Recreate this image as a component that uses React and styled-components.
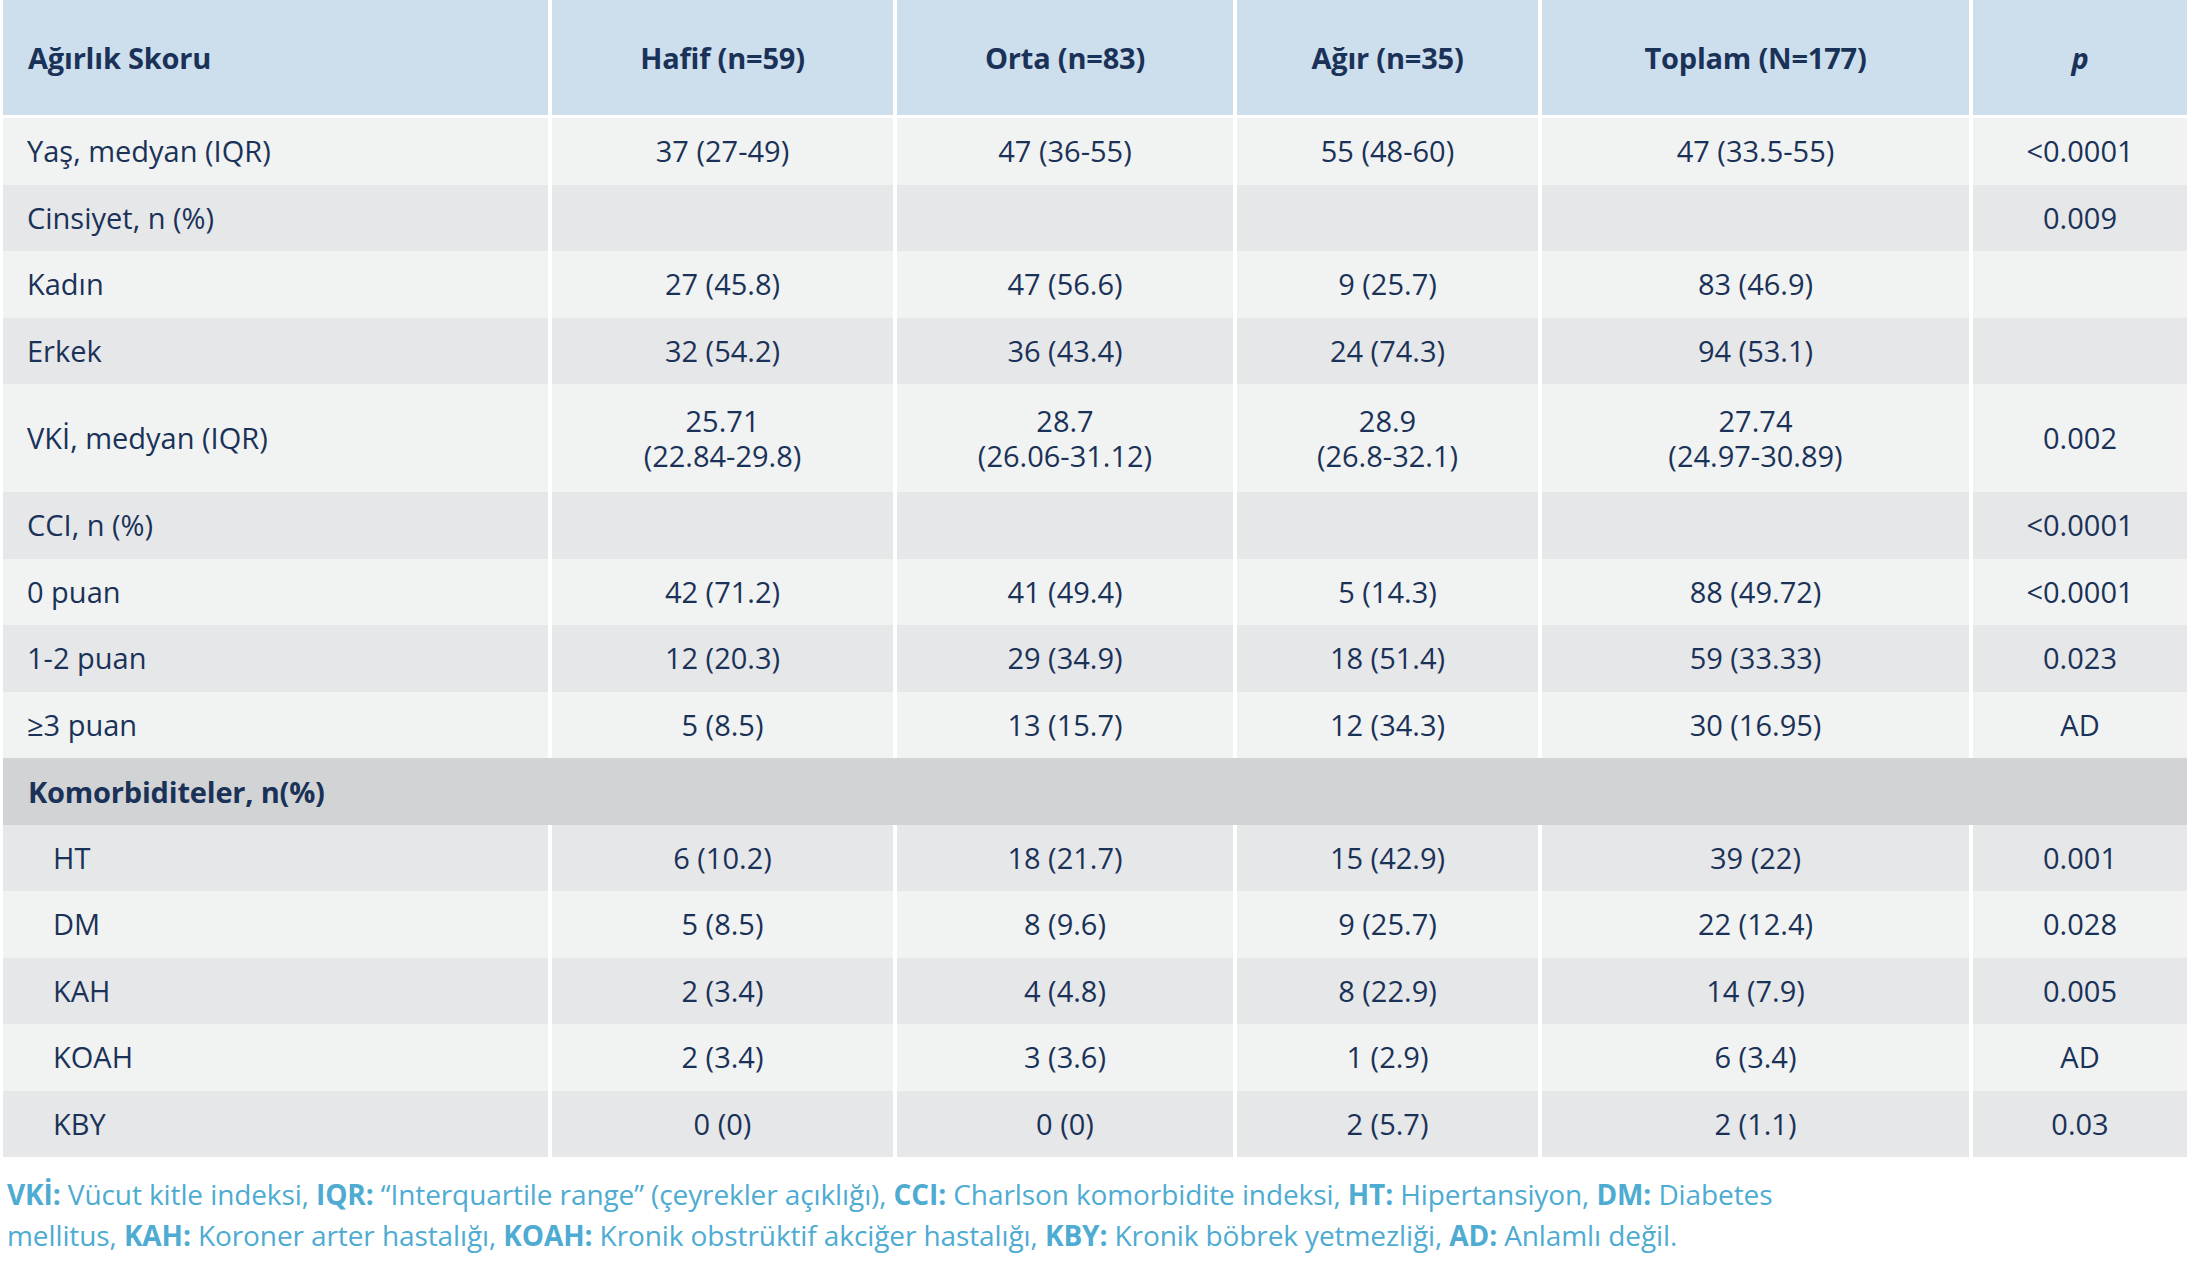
import React from "react";
import styled, { createGlobalStyle } from "styled-components";

const Global = createGlobalStyle`
  html, body { margin: 0; padding: 0; background: #ffffff; }
  body { font-family: "Open Sans", "Noto Sans", sans-serif; color: #1b3258; }
`;

const COLS = "545px 341px 336px 301px 427px 214px";

const Page = styled.div`
  width: 2189px;
  padding: 0 0 0 3px;
  box-sizing: border-box;
`;

const Table = styled.div`
  display: flex;
  flex-direction: column;
  width: 2184px;
`;

const HeaderRow = styled.div`
  display: grid;
  grid-template-columns: ${COLS};
  column-gap: 4px;
  height: 115px;
  margin-bottom: 3px;
`;

const HeadCell = styled.div`
  background: #cddfed;
  display: flex;
  align-items: center;
  justify-content: ${(p) => (p.$left ? "flex-start" : "center")};
  padding-left: ${(p) => (p.$left ? "25px" : "0")};
  font-size: 29px;
  font-weight: 700;
  font-style: ${(p) => (p.$italic ? "italic" : "normal")};
  color: #1b3258;
  letter-spacing: -0.2px;
`;

const Row = styled.div`
  display: grid;
  grid-template-columns: ${COLS};
  column-gap: 4px;
  height: ${(p) => (p.$tall ? "108px" : "66.5px")};
`;

const Cell = styled.div`
  background: ${(p) => (p.$shade ? "#e6e7e9" : "#f1f2f2")};
  display: flex;
  flex-direction: column;
  align-items: ${(p) => (p.$left ? "flex-start" : "center")};
  justify-content: center;
  padding-left: ${(p) => (p.$left ? (p.$indent ? "50px" : "24px") : "0")};
  padding-bottom: 1px;
  font-size: 29px;
  line-height: 35px;
  color: #1b3258;
  text-align: center;
  white-space: nowrap;
`;

const SectionRow = styled.div`
  height: 66.5px;
  background: #d2d3d5;
  display: flex;
  align-items: center;
  padding-left: 25px;
  font-size: 29px;
  font-weight: 700;
  color: #1b3258;
  letter-spacing: -0.2px;
`;

const Footer = styled.p`
  margin: 17px 0 0 4px;
  font-size: 28px;
  line-height: 41px;
  color: #4eabd2;
  letter-spacing: -0.1px;
`;

const Abbr = styled.b`
  font-weight: 700;
`;

const rows = [
  { label: "Yaş, medyan (IQR)", v: ["37 (27-49)", "47 (36-55)", "55 (48-60)", "47 (33.5-55)", "<0.0001"] },
  { label: "Cinsiyet, n (%)", v: ["", "", "", "", "0.009"] },
  { label: "Kadın", v: ["27 (45.8)", "47 (56.6)", "9 (25.7)", "83 (46.9)", ""] },
  { label: "Erkek", v: ["32 (54.2)", "36 (43.4)", "24 (74.3)", "94 (53.1)", ""] },
  {
    label: "VKİ, medyan (IQR)",
    tall: true,
    v: [
      ["25.71", "(22.84-29.8)"],
      ["28.7", "(26.06-31.12)"],
      ["28.9", "(26.8-32.1)"],
      ["27.74", "(24.97-30.89)"],
      "0.002",
    ],
  },
  { label: "CCI, n (%)", v: ["", "", "", "", "<0.0001"] },
  { label: "0 puan", v: ["42 (71.2)", "41 (49.4)", "5 (14.3)", "88 (49.72)", "<0.0001"] },
  { label: "1-2 puan", v: ["12 (20.3)", "29 (34.9)", "18 (51.4)", "59 (33.33)", "0.023"] },
  { label: "≥3 puan", v: ["5 (8.5)", "13 (15.7)", "12 (34.3)", "30 (16.95)", "AD"] },
];

const comorb = [
  { label: "HT", v: ["6 (10.2)", "18 (21.7)", "15 (42.9)", "39 (22)", "0.001"] },
  { label: "DM", v: ["5 (8.5)", "8 (9.6)", "9 (25.7)", "22 (12.4)", "0.028"] },
  { label: "KAH", v: ["2 (3.4)", "4 (4.8)", "8 (22.9)", "14 (7.9)", "0.005"] },
  { label: "KOAH", v: ["2 (3.4)", "3 (3.6)", "1 (2.9)", "6 (3.4)", "AD"] },
  { label: "KBY", v: ["0 (0)", "0 (0)", "2 (5.7)", "2 (1.1)", "0.03"] },
];

function DataRow({ row, shade, indent }) {
  return (
    <Row $tall={row.tall}>
      <Cell $left $indent={indent} $shade={shade}>
        {row.label}
      </Cell>
      {row.v.map((val, i) => (
        <Cell key={i} $shade={shade}>
          {Array.isArray(val) ? val.map((l, j) => <span key={j}>{l}</span>) : val}
        </Cell>
      ))}
    </Row>
  );
}

export default function App() {
  return (
    <Page>
      <Global />
      <Table>
        <HeaderRow>
          <HeadCell $left>Ağırlık Skoru</HeadCell>
          <HeadCell>Hafif (n=59)</HeadCell>
          <HeadCell>Orta (n=83)</HeadCell>
          <HeadCell>Ağır (n=35)</HeadCell>
          <HeadCell>Toplam (N=177)</HeadCell>
          <HeadCell $italic>p</HeadCell>
        </HeaderRow>
        {rows.map((r, i) => (
          <DataRow key={r.label} row={r} shade={i % 2 === 1} />
        ))}
        <SectionRow>Komorbiditeler, n(%)</SectionRow>
        {comorb.map((r, i) => (
          <DataRow key={r.label} row={r} shade={i % 2 === 0} indent />
        ))}
      </Table>
      <Footer>
        <Abbr>VKİ:</Abbr> Vücut kitle indeksi, <Abbr>IQR:</Abbr> “Interquartile range” (çeyrekler açıklığı),{" "}
        <Abbr>CCI:</Abbr> Charlson komorbidite indeksi, <Abbr>HT:</Abbr> Hipertansiyon, <Abbr>DM:</Abbr> Diabetes
        <br />
        mellitus, <Abbr>KAH:</Abbr> Koroner arter hastalığı, <Abbr>KOAH:</Abbr> Kronik obstrüktif akciğer hastalığı,{" "}
        <Abbr>KBY:</Abbr> Kronik böbrek yetmezliği, <Abbr>AD:</Abbr> Anlamlı değil.
      </Footer>
    </Page>
  );
}
